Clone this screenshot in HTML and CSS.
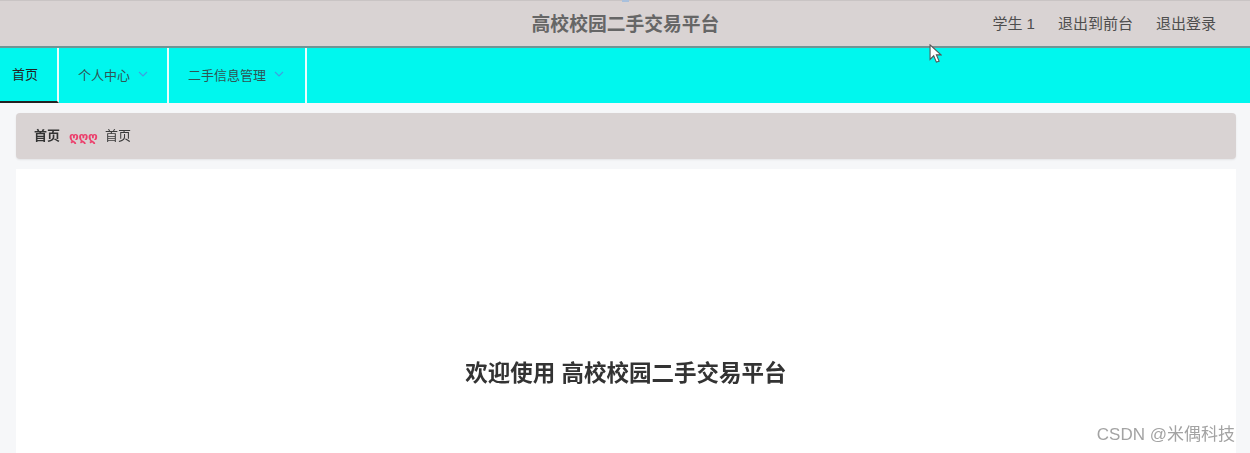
FILE: index.html
```html
<!DOCTYPE html>
<html lang="zh">
<head>
  <meta charset="UTF-8">
  <title>高校校园二手交易平台</title>
  <link rel="stylesheet" href="styles.css">
</head>
<body>
  <div class="page">
    <!-- 顶部标题 -->
    <header class="top-bar">
      <span class="top-spacer"></span>
      <div class="site-title">高校校园二手交易平台</div>
      <div class="top-links">
        <a>学生 1</a>
        <a>退出到前台</a>
        <a>退出登录</a>
      </div>
    </header>

    <!-- 导航 -->
    <nav class="nav-bar">
      <a class="nav-item nav-active">首页</a>
      <a class="nav-item nav-sub">个人中心
        <svg class="nav-arrow" viewBox="0 0 10 6"><path d="M1 1l4 4 4-4"/></svg>
      </a>
      <a class="nav-item nav-sub">二手信息管理
        <svg class="nav-arrow" viewBox="0 0 10 6"><path d="M1 1l4 4 4-4"/></svg>
      </a>
    </nav>

    <main class="content">
      <div class="crumbs">
        <b>首页</b>
        <span class="crumb-sep">ღღღ</span>
        <span>首页</span>
      </div>
      <section class="welcome">
        <h1>欢迎使用 高校校园二手交易平台</h1>
      </section>
    </main>

    <!-- 屏幕录制留下的内容 -->
    <span class="tab-mark"></span>
    <svg class="cursor" viewBox="0 0 14 21"><path d="M1 1v16l4-4 3 7 3-1-3-7h5z"/></svg>
  </div>
  <div class="watermark">CSDN @米偶科技</div>
</body>
</html>
```

FILE: styles.css
```css
* {
  margin: 0;
  padding: 0;
  box-sizing: border-box;
}

html, body {
  height: 100%;
  overflow: hidden;
}

body {
  position: relative;
  background: #f6f7f9;
  color: #333;
  font-family: "Liberation Sans", "Noto Sans CJK SC", sans-serif;
}

/* 原图是放大过的截图，文字略糊 */
.page {
  position: relative;
  height: 100%;
  filter: blur(0.5px);
}

.top-bar {
  display: grid;
  grid-template-columns: 1fr auto 1fr;
  align-items: center;
  height: 48px;
  padding-bottom: 2px;
  background: #d9d3d3;
  border-top: 1px solid #c9c4c4;
  border-bottom: 2px solid #6f9494;
}

.site-title {
  margin-left: 1px;
  font-size: 18.8px;
  font-weight: bold;
  color: #666;
}

.top-links {
  display: flex;
  justify-content: flex-end;
  gap: 23px;
  padding-right: 34px;
  font-size: 15px;
  color: #4d4d4d;
}

.nav-bar {
  display: flex;
  height: 55px;
  background: #00f7ee;
}

.nav-item {
  display: flex;
  align-items: center;
  padding-bottom: 2px;
  font-size: 13px;
  color: #2f5555;
  border-right: 2px solid #eafdfc;
}

.nav-active {
  width: 59px;
  padding-left: 12px;
  color: #222;
  border-bottom: 2px solid #222;
}

.nav-sub {
  gap: 8px;
  padding-left: 19px;
}

.nav-sub:nth-child(2) {
  width: 110px;
}

.nav-sub:nth-child(3) {
  width: 138px;
}

.nav-arrow {
  width: 10px;
  height: 6px;
  margin-top: -2px;
}

.nav-arrow path {
  fill: none;
  stroke: #3f9fe0;
  stroke-width: 1.2;
}

.content {
  display: flex;
  flex-direction: column;
  gap: 10px;
  padding: 10px 14px 0 16px;
}

.crumbs {
  display: flex;
  align-items: center;
  height: 46px;
  padding: 0 0 3px 18px;
  background: #d9d3d3;
  border-radius: 4px;
  box-shadow: 0 1px 2px rgba(0, 0, 0, 0.08);
  font-size: 13px;
  color: #3a3a3a;
}

.crumbs b {
  color: #333;
}

.crumb-sep {
  margin: 5px 8px 0 9px;
  width: 28px;
  font-family: "DejaVu Sans", sans-serif;
  font-size: 12px;
  font-weight: bold;
  letter-spacing: -0.3px;
  color: #ec3f6c;
}

.welcome {
  height: 284px;
  padding-top: 190px;
  background: #fff;
  text-align: center;
}

.welcome h1 {
  font-size: 22.5px;
  font-weight: bold;
  line-height: 30px;
  color: #333;
}

.tab-mark {
  position: absolute;
  top: 0;
  left: 622px;
  width: 7px;
  height: 2px;
  background: #a9c0dc;
}

.cursor {
  position: absolute;
  top: 44px;
  left: 929px;
  width: 13px;
  height: 19px;
}

.cursor path {
  fill: #fff;
  stroke: #555;
  stroke-width: 1.2;
}

.watermark {
  position: absolute;
  right: 15px;
  top: 424px;
  font-size: 17px;
  line-height: 22px;
  color: #a3a3a3;
}
```
